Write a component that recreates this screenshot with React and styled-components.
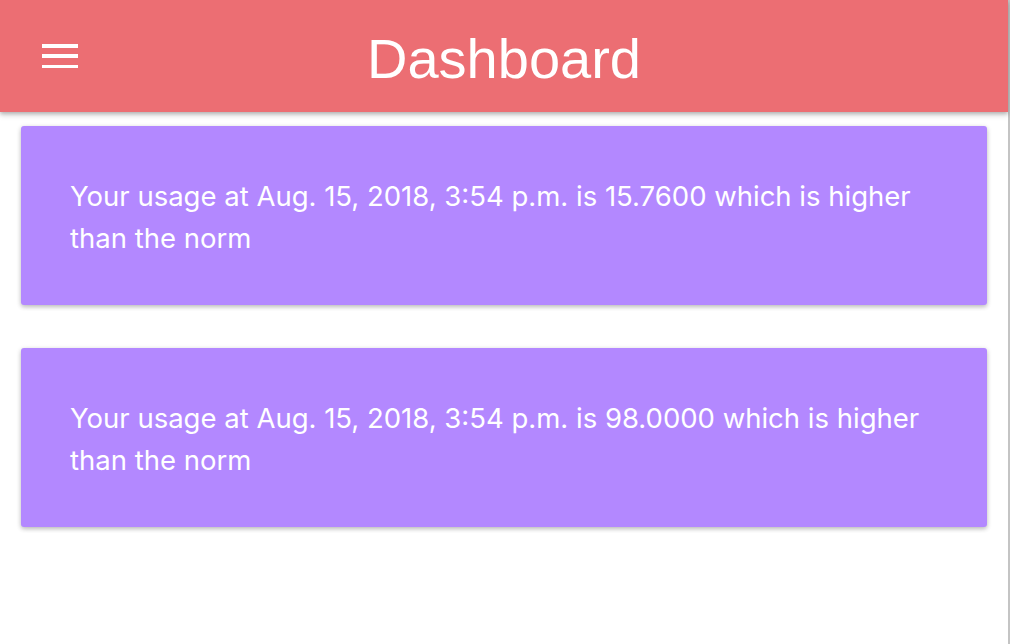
import React from "react";
import styled, { createGlobalStyle } from "styled-components";

const GlobalStyle = createGlobalStyle`
  html, body { margin: 0; padding: 0; background: #ffffff; }
  body { font-family: Inter, "Noto Sans", sans-serif; }
`;

const Page = styled.div`
  display: flex;
  width: 1010px;
  min-height: 644px;
`;

const Main = styled.div`
  flex: 1;
  display: flex;
  flex-direction: column;
  background: #ffffff;
`;

const EdgeStrip = styled.div`
  width: 2px;
  background: #c4c4c4;
`;

const Header = styled.header`
  height: 112px;
  background: #ec6e73;
  display: grid;
  grid-template-columns: 1fr auto 1fr;
  align-items: center;
  box-shadow: 0 2px 4px rgba(0, 0, 0, 0.25), 0 4px 6px rgba(0, 0, 0, 0.08);
  position: relative;
  z-index: 1;
`;

const MenuButton = styled.button`
  justify-self: start;
  margin-left: 42px;
  width: 36px;
  height: 24px;
  padding: 0;
  border: none;
  background: transparent;
  display: flex;
  flex-direction: column;
  justify-content: space-between;
  cursor: pointer;
`;

const MenuBar = styled.span`
  display: block;
  height: 3.5px;
  background: #ffffff;
`;

const Title = styled.h1`
  margin: 0;
  padding-top: 4px;
  font-family: "Liberation Sans", Arial, sans-serif;
  font-weight: 400;
  font-size: 56px;
  color: #ffffff;
`;

const CardList = styled.div`
  display: flex;
  flex-direction: column;
  gap: 43px;
  padding: 14px 21px 0 21px;
`;

const Card = styled.div`
  background: #b388ff;
  border-radius: 3px;
  padding: 49px 40px 46px 49px;
  box-shadow: 0 2px 4px rgba(0, 0, 0, 0.22), 0 1px 6px rgba(0, 0, 0, 0.08);
`;

const CardText = styled.p`
  margin: 0;
  color: #ffffff;
  font-family: Inter, "Noto Sans", sans-serif;
  font-size: 27.5px;
  line-height: 42px;
  max-width: 870px;
`;

const alerts = [
  "Your usage at Aug. 15, 2018, 3:54 p.m. is 15.7600 which is higher than the norm",
  "Your usage at Aug. 15, 2018, 3:54 p.m. is 98.0000 which is higher than the norm",
];

export default function App() {
  return (
    <>
      <GlobalStyle />
      <Page>
        <Main>
          <Header>
            <MenuButton aria-label="menu">
              <MenuBar />
              <MenuBar />
              <MenuBar />
            </MenuButton>
            <Title>Dashboard</Title>
            <span />
          </Header>
          <CardList>
            {alerts.map((a, i) => (
              <Card key={i}>
                <CardText>{a}</CardText>
              </Card>
            ))}
          </CardList>
        </Main>
        <EdgeStrip />
      </Page>
    </>
  );
}
